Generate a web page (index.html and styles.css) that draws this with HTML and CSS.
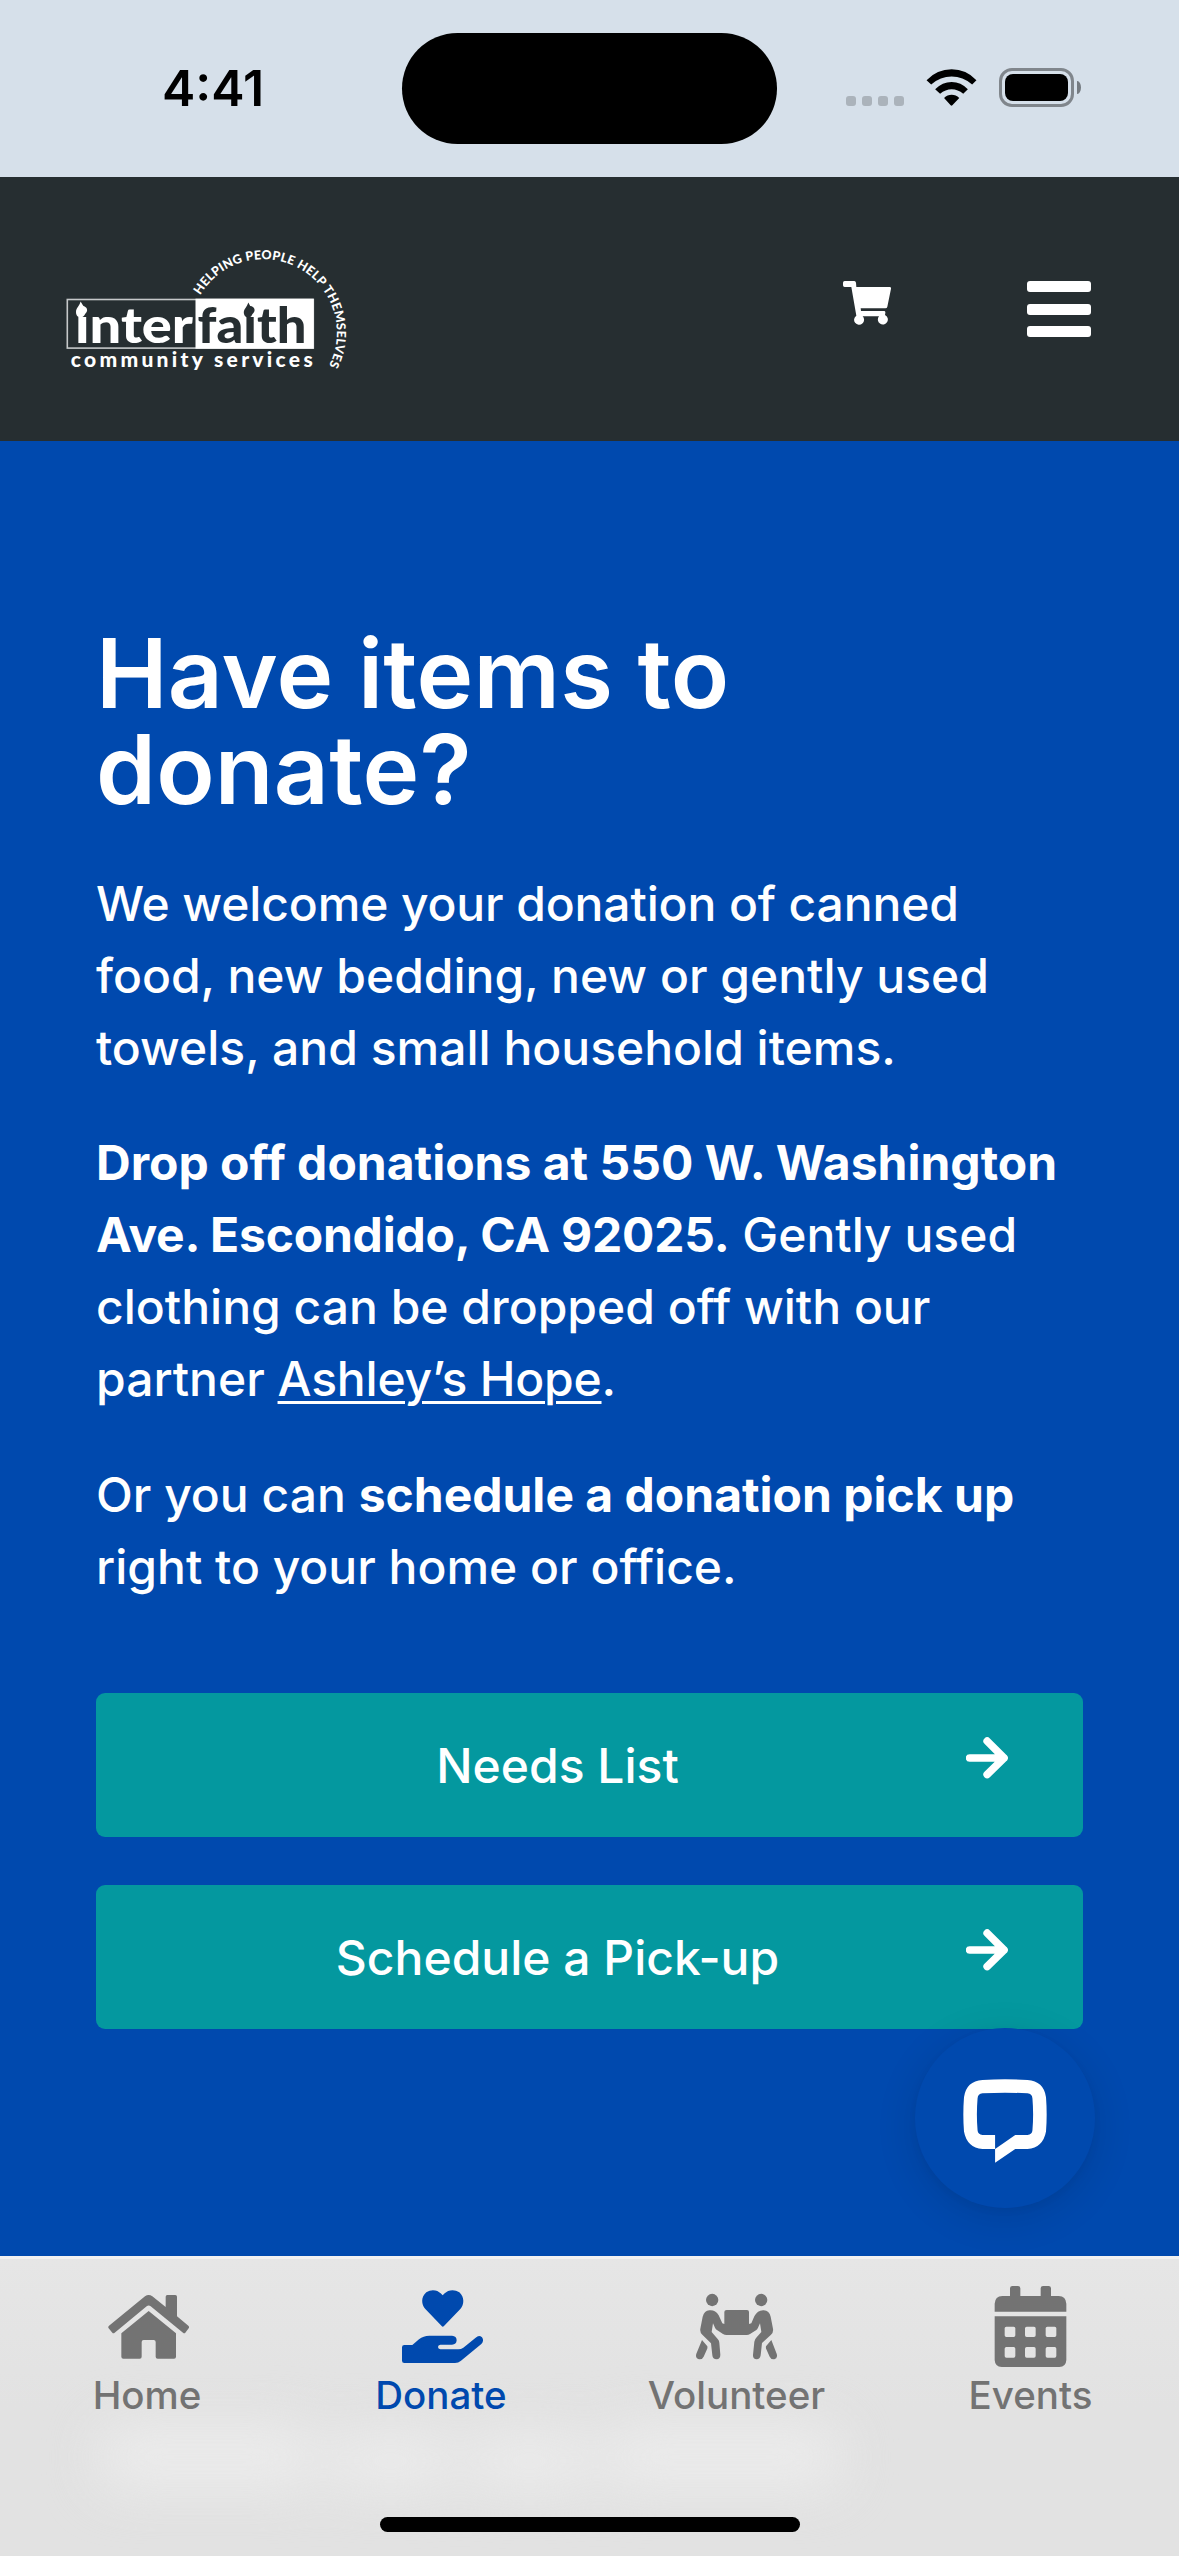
FILE: index.html
```html
<!DOCTYPE html>
<html lang="en">
<head>
<meta charset="utf-8">
<title>Interfaith Community Services</title>
<link rel="stylesheet" href="styles.css">
</head>
<body>
<div class="screen">
  <div class="status-bar">
    <div class="time">4:41</div>
    <div class="island"></div>
    <div class="status-icons">
      <div class="signal"><i></i><i></i><i></i><i></i></div>
      <svg class="wifi" viewBox="318 56 153 112" fill="#000">
        <path d="M319 90Q351 57 395 57T470 90L457 103Q429 79 395 79T333 103Z"/>
        <path d="M345 117Q367 95 395 95T444 117L430 131Q414 117 395 117T360 131Z"/>
        <path d="M372 144Q382 134 395 134T418 144L397 166Q395 169 392 166Z"/>
      </svg>
      <div class="battery"><div class="charge"></div></div>
      <div class="nub"></div>
    </div>
  </div>

  <header class="header">
    <svg class="logo" viewBox="0 0 320 160">
      <defs><path id="arc" d="M150.100 65.200A73.500 73.500 0 0 1 213.300 29.200A73.500 73.500 0 0 1 275 142.700"/></defs>
      <rect x="17.300" y="69.500" width="246" height="48.600" fill="none" stroke="#c5c8c9" stroke-width="1.600"/>
      <rect x="145.500" y="68.700" width="118.200" height="50" fill="#fff"/>
      <text class="word" x="25" y="112.700" textLength="118" lengthAdjust="spacingAndGlyphs" fill="#fff">inter</text>
      <text class="word" x="147.500" y="112.700" textLength="109" lengthAdjust="spacingAndGlyphs" fill="#262e31">faith</text>
      <path d="M30.600 71.500C33 76 35.800 78 35.400 82.500C35 86 32.500 87.500 30.600 87.500C28.500 87.500 26 86 26 82C26 78 29.500 76 30.600 71.500Z" fill="#fff"/>
      <path d="M198.300 72.500C200.500 77 203 79 202.800 82.500C202.500 85.500 200.500 87.500 198.300 87.500C196 87.500 193.800 85.500 193.800 82.500C193.800 79 197 77 198.300 72.500Z" fill="#262e31"/>
      <text class="sub" x="20.700" y="137" textLength="242">community services</text>
      <text class="motto"><textPath href="#arc">HELPING PEOPLE HELP THEMSELVES</textPath></text>
    </svg>
    <div class="actions">
      <svg class="cart" viewBox="69 693 144 132" fill="#fff">
        <path d="M74 693H103Q107 693 108 698L109 711H209Q214 711 213 716L202 770Q201 775 196 775H122L123 783H192Q197 783 196 789L195 795A15 15 0 1 1 177 799H128A15 15 0 1 1 109 797L94 711H74Q69 711 69 706V698Q69 693 74 693Z"/>
      </svg>
      <div class="burger"><i></i><i></i><i></i></div>
    </div>
  </header>

  <main class="content">
    <h1>Have items to<br>donate?</h1>
    <p><span class="snug">We welcome your donation of canned</span><br>food, new bedding, new or gently used<br>towels, and small household items.</p>
    <p><b>Drop off donations at 550 W. Washington<br><span class="tight">Ave. Escondido, CA 92025.</span></b> Gently used<br>clothing can be dropped off with our<br>partner <a>Ashley’s Hope</a>.</p>
    <p>Or you can <b>schedule a donation pick up</b><br>right to your home or office.</p>
    <div class="buttons">
      <div class="button"><span>Needs List</span>
        <svg class="arrow" viewBox="78 51 127 126"><path d="M89 114H193M142 63L193 114L142 164"/></svg>
      </div>
      <div class="button"><span>Schedule a Pick-up</span>
        <svg class="arrow" viewBox="78 51 127 126"><path d="M89 114H193M142 63L193 114L142 164"/></svg>
      </div>
    </div>
    <div class="chat">
      <svg viewBox="188 206 254 254" fill="#fff">
        <path fill-rule="evenodd" d="M247 209Q315 205 383 209Q432 212 439 261Q443 313 439 365Q430 414 383 418H346L285 459V418H247Q200 414 191 365Q187 313 191 261Q198 212 247 209ZM247 249Q233 250 232 265Q228 313 232 361Q233 374 247 375H285V418L346 375H383Q397 374 398 361Q402 313 398 265Q397 250 383 249Q315 246 247 249Z"/>
      </svg>
    </div>
  </main>

  <nav class="tab-bar">
    <div class="glow"><i></i><i></i><i></i><i></i></div>
    <div class="tabs">
      <div class="tab">
        <svg viewBox="54 48 243 243" fill="currentColor">
          <path d="M165 79Q176 71 187 79L227 111V80Q227 75 232 75H256Q261 75 261 80V139L295 167Q299 171 296 175L286 188Q283 191 279 188L182 109Q176 104 170 109L74 188Q70 191 67 188L56 175Q53 171 57 167Z"/>
          <path d="M176 123L258 190V260Q258 266 252 266H203Q197 266 197 260V216Q197 210 191 210H161Q155 210 155 216V260Q155 266 149 266H100Q94 266 94 260V190Z"/>
        </svg>
        <span>Home</span>
      </div>
      <div class="tab active">
        <svg viewBox="936 48 243 243" fill="currentColor">
          <path d="M1055 168L1006 117C994 105 992 81 1009 67C1024 56 1043 60 1052 70L1058 76L1064 70C1073 60 1093 56 1108 67C1124 81 1123 105 1111 117L1062 168Q1058 173 1055 168Z"/>
          <path d="M943 225H967L987 208Q1000 197 1018 197H1086Q1100 198 1100 211Q1099 224 1086 224H1051Q1044 225 1044 231T1051 238H1105Q1113 238 1120 233L1157 203Q1167 194 1176 202Q1183 212 1174 222L1113 272Q1105 279 1095 279H943Q936 279 936 272V232Q936 225 943 225Z"/>
        </svg>
        <span>Donate</span>
      </div>
      <div class="tab">
        <svg viewBox="168 48 243 243" fill="currentColor">
          <circle cx="216.500" cy="90" r="18.500"/><circle cx="363.500" cy="90" r="18.500"/>
          <path d="M260 120H321Q327 120 327 126V162L334 160L343 139Q353 120 371 121Q388 122 392 140L399 176Q401 187 393 194L366 219L362 256Q360 268 350 268Q338 267 339 255L343 215Q344 208 350 202L364 186L360 160L354 173Q352 178 348 181L330 192Q326 195 320 195H260Q254 195 249 192L232 181Q227 178 225 173L219 160L215 186L233 207Q238 212 238 218L241 254Q241 267 230 268Q218 268 217 256L213 220L187 194Q179 187 181 176L188 140Q193 122 208 121Q226 119 236 136L247 160L253 162V126Q253 120 260 120Z"/>
          <path d="M186 210L202 229Q203 234 201 238L191 260Q187 269 177 268Q165 264 169 251Z"/>
          <path d="M394 210L378 229Q377 234 379 238L389 260Q393 269 403 268Q414 264 410 251Z"/>
        </svg>
        <span>Volunteer</span>
      </div>
      <div class="tab">
        <svg viewBox="1051 48 243 243" fill="currentColor">
          <path d="M1065 125V101Q1066 79 1088 78H1111V55Q1111 48 1118 48H1135Q1142 48 1142 55V78H1203V55Q1203 48 1210 48H1227Q1234 48 1234 55V78H1257Q1279 79 1280 101V125Z"/>
          <path fill-rule="evenodd" d="M1065 139H1280V270Q1279 290 1259 291H1086Q1066 290 1065 270ZM1100 170Q1095 170 1095 175V196Q1095 201 1100 201H1122Q1127 201 1127 196V175Q1127 170 1122 170ZM1161 170Q1156 170 1156 175V196Q1156 201 1161 201H1183Q1188 201 1188 196V175Q1188 170 1183 170ZM1223 170Q1218 170 1218 175V196Q1218 201 1223 201H1245Q1250 201 1250 196V175Q1250 170 1245 170ZM1100 231Q1095 231 1095 236V258Q1095 263 1100 263H1122Q1127 263 1127 258V236Q1127 231 1122 231ZM1161 231Q1156 231 1156 236V258Q1156 263 1161 263H1183Q1188 263 1188 258V236Q1188 231 1183 231ZM1223 231Q1218 231 1218 236V258Q1218 263 1223 263H1245Q1250 263 1250 258V236Q1250 231 1245 231Z"/>
        </svg>
        <span>Events</span>
      </div>
    </div>
    <div class="home-indicator"></div>
  </nav>
</div>
</body>
</html>
```
FILE: styles.css
```css
* { box-sizing: border-box; margin: 0; padding: 0; }
body { font-family: Inter, "Liberation Sans", sans-serif; background: #0049ae; }
svg { display: block; flex: none; }

.screen {
  width: 1179px;
  height: 2556px;
  display: flex;
  flex-direction: column;
  overflow: hidden;
}

/* Status bar */
.status-bar {
  height: 177px;
  flex: none;
  background: #d6e0ea;
  display: grid;
  grid-template-columns: 402px 375px 1fr;
}
.time {
  padding: 58px 0 0 162px;
  font-size: 50px;
  line-height: 60px;
  font-weight: 600;
}
.island { height: 111px; margin-top: 33px; border-radius: 56px; background: #000; }
.status-icons { display: flex; padding: 68px 0 0 69px; align-items: flex-start; }
.signal { display: flex; gap: 6px; margin: 28px 22px 0 0; }
.signal i { width: 10px; height: 10px; border-radius: 3px; background: #abb3bb; }
.wifi { width: 51px; height: 37px; margin: 1px 22px 0 0; }
.battery {
  width: 75px;
  height: 39px;
  padding: 3px;
  border: 3px solid #80868c;
  border-radius: 13px;
}
.charge { height: 27px; border-radius: 8px; background: #000; }
.nub { width: 4px; height: 13px; margin: 13px 0 0 3px; border-radius: 0 4px 4px 0 / 0 7px 7px 0; background: #757b81; }

/* Header */
.header {
  height: 264px;
  flex: none;
  padding: 53px 88px 0 50px;
  display: flex;
  justify-content: space-between;
  align-items: flex-start;
  background: #262e31;
}
.logo { width: 320px; height: 160px; }
.logo text { font-family: Lato, sans-serif; }
.word { font-size: 50px; font-weight: 900; }
.sub { font-size: 21px; font-weight: 900; fill: #fff; }
.motto { font-size: 12.5px; font-weight: 900; fill: #fff; letter-spacing: 0.25px; }
.actions { display: flex; gap: 136px; padding-top: 51px; }
.cart { width: 48px; height: 44px; }
.burger { width: 64px; display: flex; flex-direction: column; gap: 11.5px; }
.burger i { height: 11px; border-radius: 3px; background: #fff; }

/* Donation content */
.content {
  height: 1815px;
  flex: none;
  position: relative;
  padding: 184px 96px 0;
  background: #0049ae;
  color: #fff;
  white-space: nowrap;
}
h1 { font-size: 96px; line-height: 96px; font-weight: 600; letter-spacing: 0.25px; margin-bottom: 50.5px; }
p { font-size: 48px; line-height: 72px; font-weight: 450; margin-bottom: 43.5px; }
b { font-weight: 700; }
.tight { letter-spacing: -0.2px; }
.snug { letter-spacing: -0.13px; }
a { text-decoration: underline; text-decoration-thickness: 3px; text-underline-offset: 5px; letter-spacing: -0.2px; }
.buttons { display: flex; flex-direction: column; gap: 48px; padding-top: 47px; }
.button {
  height: 144px;
  padding: 0 75px;
  display: flex;
  align-items: center;
  border-radius: 9px;
  background: #04989f;
  font-size: 48px;
  font-weight: 450;
}
.button span { flex: 1; text-align: center; padding-right: 22px; }
.arrow { width: 42px; height: 42px; margin-top: -15px; fill: none; stroke: #fff; }
.arrow path { stroke-linecap: round; stroke-linejoin: round; stroke-width: 23px; }
.chat {
  position: absolute;
  left: 915px;
  top: 1587px;
  width: 180px;
  height: 180px;
  padding: 51px 48px;
  border-radius: 50%;
  background: #0049ae;
  box-shadow: 0 9px 42px rgba(0, 0, 0, .12), 0 3px 9px rgba(0, 0, 0, .04);
}
.chat svg { width: 84px; height: 84px; }

/* Bottom tabs */
.tab-bar {
  height: 300px;
  flex: none;
  position: relative;
  border-top: 3px solid #f1f1f1;
  background: linear-gradient(#e6e6e6, #e2e2e2 50%, #e2e2e2);
  color: #737373;
}
.tabs { position: relative; display: grid; grid-template-columns: repeat(4, 1fr); padding: 27px 1.5px 0; }
.tab { display: flex; flex-direction: column; align-items: center; }
.tab.active { color: #0049ae; }
.tab svg { width: 81px; height: 81px; }
.tab span { font-size: 38.5px; line-height: 46px; font-weight: 500; margin-top: 5px; }
.tab:nth-child(-n+2) span { margin-right: 3px; }
.home-indicator { position: relative; width: 420px; height: 15px; margin: 99px auto 0; border-radius: 8px; background: #000; }
.glow { position: absolute; left: 100px; top: 168px; width: 740px; height: 60px; display: flex; gap: 14px; filter: blur(26px); }
.glow i { width: 215px; background: #ececec; border-radius: 20px; }
.glow i:nth-child(2), .glow i:nth-child(3) { width: 125px; margin-top: 8px; }
.glow i:nth-child(4) { width: 235px; }
```
